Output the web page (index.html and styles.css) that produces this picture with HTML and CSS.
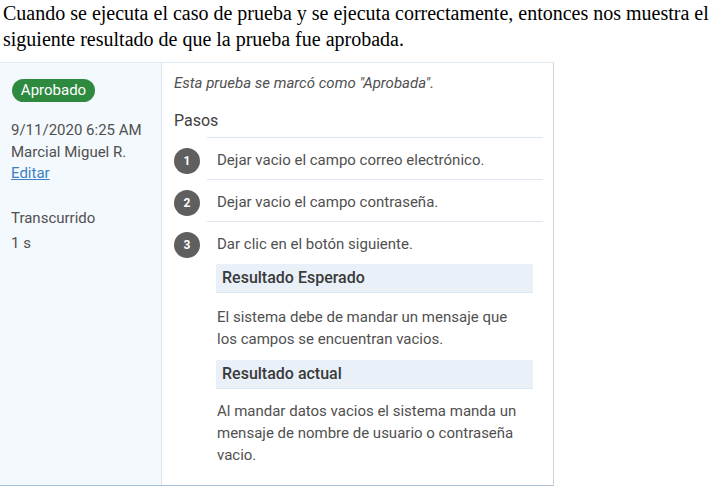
FILE: index.html
```html
<!DOCTYPE html>
<html lang="es">
<head>
<meta charset="utf-8">
<title>Resultado de prueba</title>
<link rel="stylesheet" href="styles.css">
</head>
<body>
<p class="caption">Cuando se ejecuta el caso de prueba y se ejecuta correctamente, entonces nos muestra el siguiente resultado de que la prueba fue aprobada.</p>
<div class="panel">
  <aside class="side">
    <span class="badge">Aprobado</span>
    <div class="meta">
      <div>9/11/2020 6:25 AM</div>
      <div>Marcial Miguel R.</div>
      <a class="link" href="#">Editar</a>
    </div>
    <div class="meta elapsed">
      <div>Transcurrido</div>
      <div>1 s</div>
    </div>
  </aside>
  <main class="content">
    <p class="note">Esta prueba se marcó como "Aprobada".</p>
    <h2 class="title">Pasos</h2>
    <ol class="steps">
      <li class="step">
        <span class="num">1</span>
        <div class="body"><p class="text">Dejar vacio el campo correo electrónico.</p></div>
      </li>
      <li class="step">
        <span class="num">2</span>
        <div class="body"><p class="text">Dejar vacio el campo contraseña.</p></div>
      </li>
      <li class="step">
        <span class="num">3</span>
        <div class="body">
          <p class="text">Dar clic en el botón siguiente.</p>
          <div class="box box-first">Resultado Esperado</div>
          <p class="para para-first">El sistema debe de mandar un mensaje que los campos se encuentran vacios.</p>
          <div class="box">Resultado actual</div>
          <p class="para">Al mandar datos vacios el sistema manda un mensaje de nombre de usuario o contraseña vacio.</p>
        </div>
      </li>
    </ol>
  </main>
</div>
</body>
</html>
```

FILE: styles.css
```css
html, body {
  margin: 0;
  padding: 0;
  background: #ffffff;
}

.caption {
  margin: 0;
  padding: 0 0 0 3px;
  font-family: "Liberation Serif", "Times New Roman", serif;
  font-size: 20px;
  line-height: 26px;
  color: #000;
  width: 718px;
}

.panel {
  display: flex;
  width: 553px;
  margin-top: 10px;
  border-top: 1px solid #e1e9f0;
  border-right: 1px solid #cbd6e0;
  border-bottom: 1px solid #a9bfd3;
  font-family: Roboto, "Noto Sans", sans-serif;
  font-size: 15px;
  color: #505050;
  height: 422px;
}

.side {
  flex: none;
  background: #f4f9fd;
  border-right: 1px solid #dce5ed;
  padding: 16px 0 0 11px;
  box-sizing: border-box;
  width: 162px;
}

.badge {
  display: inline-block;
  background: #2e8a3f;
  color: #fff;
  border-radius: 12px;
  height: 23px;
  line-height: 23px;
  font-size: 15px;
  width: 83px;
  box-sizing: border-box;
  text-align: center;
  margin-left: 1px;
}

.meta {
  margin-top: 18px;
  line-height: 21.5px;
}

.link {
  color: #3d7fc1;
  text-decoration: underline;
}

.elapsed {
  margin-top: 21px;
  line-height: 25px;
}

.content {
  flex: 1;
  padding: 10px 10px 0 12px;
}

.note {
  margin: 0;
  font-style: italic;
  line-height: 21px;
}

.title {
  margin: 16px 0 0;
  font-size: 16px;
  font-weight: 400;
  color: #404040;
  line-height: 21px;
  padding-bottom: 6px;
}

.steps {
  list-style: none;
  margin: 0;
  padding: 0;
}

.step {
  display: grid;
  grid-template-columns: 33px 1fr;
}

.num {
  width: 26px;
  height: 26px;
  border-radius: 50%;
  background: #5f5f5f;
  color: #fff;
  font-size: 12px;
  font-weight: 700;
  text-align: center;
  line-height: 26px;
  margin-top: 11px;
}

.body {
  border-top: 1px solid #dde6ee;
  padding: 12px 10px 8px 10px;
}

.text {
  margin: 0;
  line-height: 21px;
}

.box {
  margin: 10px 0 0 -1px;
  background: #e9f0f8;
  border-bottom: 1px solid #dce6f0;
  height: 28px;
  line-height: 28px;
  padding-left: 6px;
  font-size: 16px;
  font-weight: 500;
  color: #3a3a3a;
}

.box-first {
  margin-top: 9px;
}

.para {
  margin: 11px 0 0;
  line-height: 22px;
  padding-right: 4px;
}

.para-first {
  margin-top: 13px;
}
```
